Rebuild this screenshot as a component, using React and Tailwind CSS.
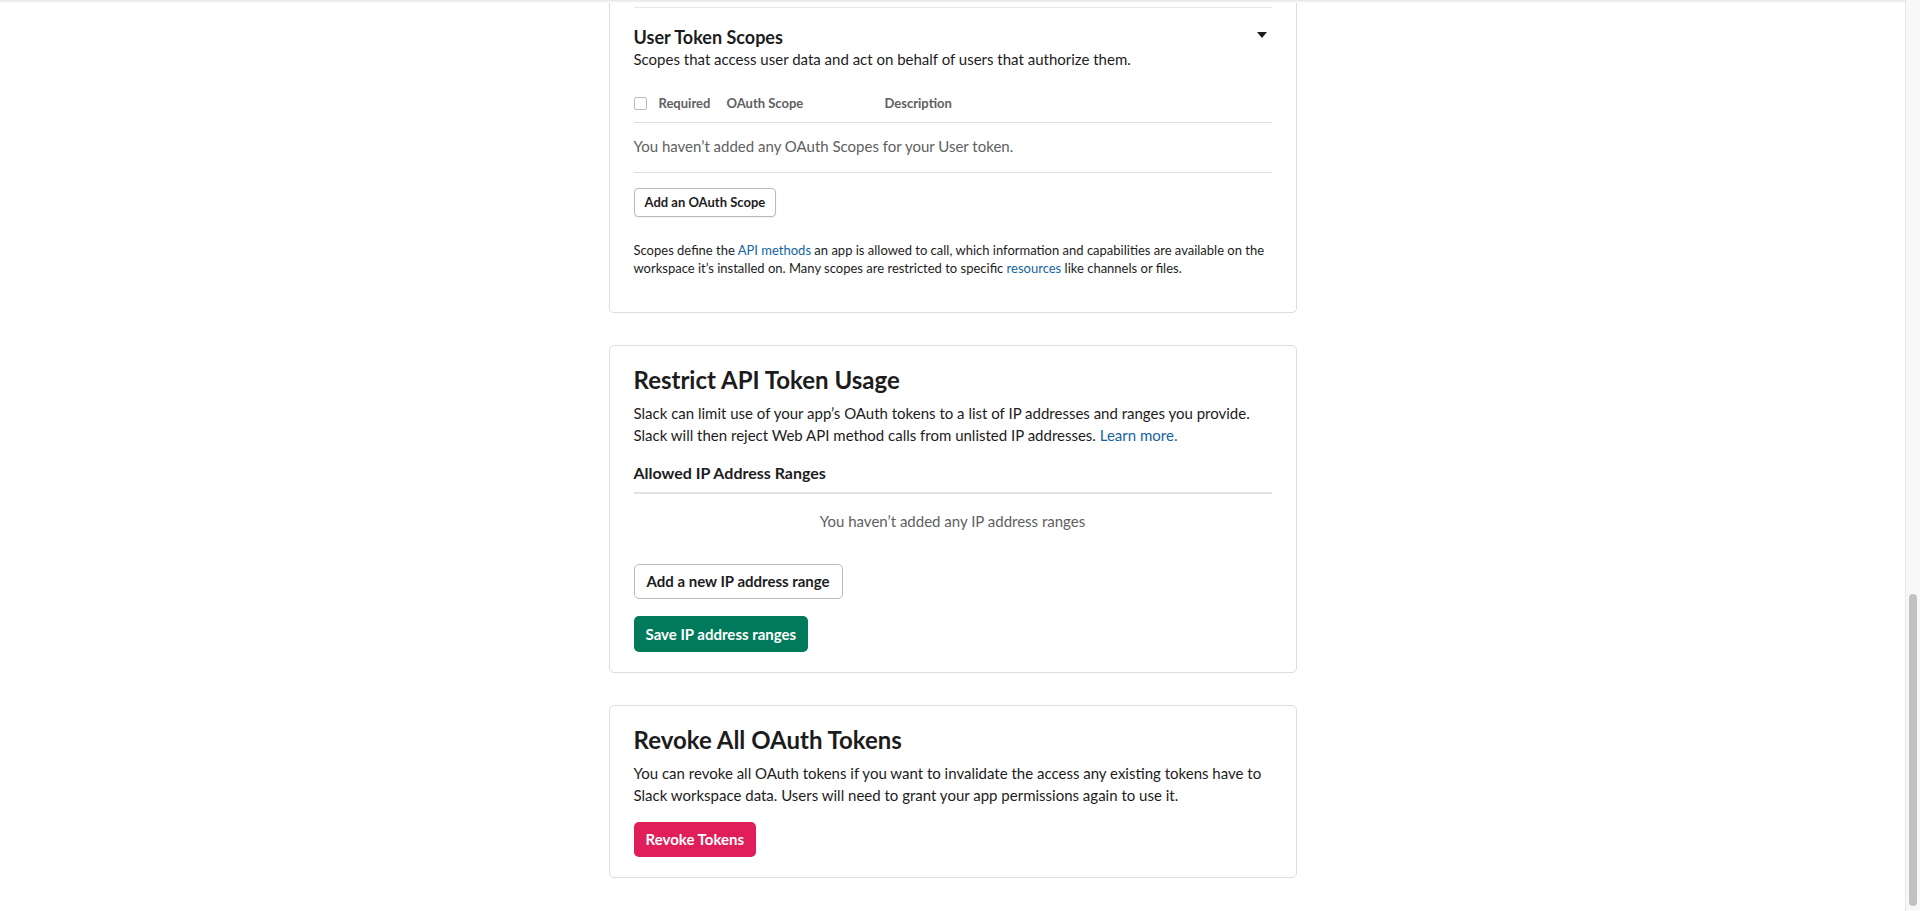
import { useState } from "react";

const SaveLink = ({ children }) => (
  <a href="#" className="text-[#1264a3] hover:underline">
    {children}
  </a>
);

// Scopes card (only the user token part is on screen)
const UserTokenScopes = () => {
  const [open, setOpen] = useState(true);

  return (
    <div className="border border-t-0 border-[#dddddd] rounded-b-[5px] px-6 pt-[4px] pb-[35px]">
      <div className="border-t border-[#e8e8e8]" />

      {/* Section header */}
      <div className="flex items-start justify-between pt-[17px]">
        <div>
          <h3 className="text-[18px] leading-6 font-bold">User Token Scopes</h3>
          <p className="text-[15px] leading-5">
            Scopes that access user data and act on behalf of users that authorize them.
          </p>
        </div>
        <button onClick={() => setOpen(!open)} className="mt-[7px] mr-[5px] text-[#1d1c1d]">
          <svg width="10" height="6" viewBox="0 0 10 6">
            <path d="M0 0h10L5 6z" fill="currentColor" />
          </svg>
        </button>
      </div>

      {/* Table header */}
      <div className="flex items-center mt-6 pb-[9px] border-b border-[#dddddd] text-[13px] leading-5 font-bold text-[#616061]">
        <span className="w-[13px] h-[13px] rounded-[2px] border border-[#bbbbbb] bg-white" />
        <span className="ml-3 w-[68px]">Required</span>
        <span className="w-[158px]">OAuth Scope</span>
        <span>Description</span>
      </div>

      <p className="pt-[13px] pb-[16px] text-[15px] leading-5 text-[#616061] border-b border-[#dddddd]">
        You haven’t added any OAuth Scopes for your User token.
      </p>

      <button className="mt-[15px] h-[29px] px-[10px] rounded-[4px] border border-[#bbbabb] bg-white text-[13px] font-bold shadow-[0_1px_2px_rgba(0,0,0,0.06)]">
        Add an OAuth Scope
      </button>

      <p className="mt-[24px] text-[13px] leading-[18px]">
        Scopes define the <SaveLink>API methods</SaveLink> an app is allowed to call, which
        information and capabilities are available on the workspace it’s installed on. Many
        scopes are restricted to specific <SaveLink>resources</SaveLink> like channels or files.
      </p>
    </div>
  );
};

const RestrictTokenUsage = () => (
  <div className="mt-8 border border-[#dddddd] rounded-[5px] px-6 pt-5 pb-5">
    <h2 className="text-[24px] leading-7 font-bold">Restrict API Token Usage</h2>
    <p className="mt-2 text-[15px] leading-[22px]">
      Slack can limit use of your app’s OAuth tokens to a list of IP addresses and ranges you
      provide. Slack will then reject Web API method calls from unlisted IP addresses.{" "}
      <SaveLink>Learn more.</SaveLink>
    </p>

    <h4 className="mt-4 pb-2 border-b-2 border-[#e2e2e2] text-[16px] leading-[22px] font-bold">
      Allowed IP Address Ranges
    </h4>

    <p className="mt-[16px] text-center text-[15px] leading-[22px] text-[#616061]">
      You haven’t added any IP address ranges
    </p>

    <div className="mt-[32px] flex flex-col items-start gap-[17px]">
      <button className="h-[35px] px-[12px] rounded-[5px] border border-[#bbbabb] bg-white text-[15px] font-bold">
        Add a new IP address range
      </button>
      <button className="h-[36px] px-[12px] rounded-[5px] bg-[#007a5a] text-white text-[15px] font-bold">
        Save IP address ranges
      </button>
    </div>
  </div>
);

const RevokeTokens = () => (
  <div className="mt-8 border border-[#dddddd] rounded-[5px] px-6 pt-5 pb-5">
    <h2 className="text-[24px] leading-7 font-bold">Revoke All OAuth Tokens</h2>
    <p className="mt-2 text-[15px] leading-[22px]">
      You can revoke all OAuth tokens if you want to invalidate the access any existing tokens
      have to Slack workspace data. Users will need to grant your app permissions again to use it.
    </p>
    <button className="mt-4 h-[35px] px-[12px] rounded-[5px] bg-[#e01e5a] text-white text-[15px] font-bold">
      Revoke Tokens
    </button>
  </div>
);

export default function App() {
  return (
    <div className="flex h-screen overflow-hidden bg-white text-[#1d1c1d] font-[Lato,sans-serif]">
      <main className="flex-1 min-w-0">
        {/* header shadow */}
        <div className="h-[3px] bg-linear-to-b from-[#e6e6e6] to-white" />

        <div className="mx-auto w-[688px] pb-8">
          <UserTokenScopes />
          <RestrictTokenUsage />
          <RevokeTokens />
        </div>
      </main>

      {/* page scrollbar */}
      <div className="w-[15px] shrink-0 flex flex-col bg-[#f8f8f8] border-l border-[#e8e8e8]">
        <div className="mt-[594px] mx-auto w-2 h-[312px] rounded-full bg-[#c1c1c1]" />
      </div>
    </div>
  );
}
